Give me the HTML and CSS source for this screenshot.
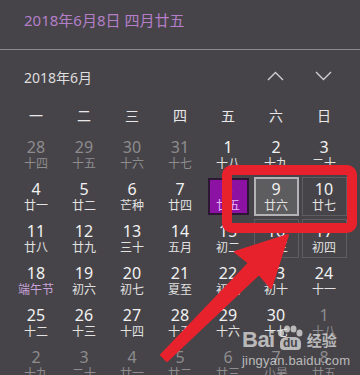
FILE: index.html
```html
<!DOCTYPE html>
<html lang="zh">
<head>
<meta charset="utf-8">
<link rel="stylesheet" href="styles.css">
</head>
<body>
<div class="app">
  <div class="today">2018年6月8日 四月廿五</div>
  <div class="monthbar">
    <div class="month">2018年6月</div>
    <div class="navs">
      <span class="nav"><svg width="17" height="10" viewBox="0 0 17 10"><polyline points="1,9 8.5,1.5 16,9"/></svg></span>
      <span class="nav"><svg width="17" height="10" viewBox="0 0 17 10"><polyline points="1,1 8.5,8.5 16,1"/></svg></span>
    </div>
  </div>
  <div class="weekdays">
    <span>一</span><span>二</span><span>三</span><span>四</span><span>五</span><span>六</span><span>日</span>
  </div>
  <div class="days">
    <div class="cell other"><span class="n">28</span><span class="l">十四</span></div>
    <div class="cell other"><span class="n">29</span><span class="l">十五</span></div>
    <div class="cell other"><span class="n">30</span><span class="l">十六</span></div>
    <div class="cell other"><span class="n">31</span><span class="l">十七</span></div>
    <div class="cell"><span class="n">1</span><span class="l">十八</span></div>
    <div class="cell"><span class="n">2</span><span class="l">十九</span></div>
    <div class="cell"><span class="n">3</span><span class="l">二十</span></div>

    <div class="cell"><span class="n">4</span><span class="l">廿一</span></div>
    <div class="cell"><span class="n">5</span><span class="l">廿二</span></div>
    <div class="cell"><span class="n">6</span><span class="l">芒种</span></div>
    <div class="cell"><span class="n">7</span><span class="l">廿四</span></div>
    <div class="cell current"><span class="n">8</span><span class="l">廿五</span></div>
    <div class="cell selected"><span class="n">9</span><span class="l">廿六</span></div>
    <div class="cell reveal"><span class="n">10</span><span class="l">廿七</span></div>

    <div class="cell"><span class="n">11</span><span class="l">廿八</span></div>
    <div class="cell"><span class="n">12</span><span class="l">廿九</span></div>
    <div class="cell"><span class="n">13</span><span class="l">三十</span></div>
    <div class="cell"><span class="n">14</span><span class="l">五月</span></div>
    <div class="cell"><span class="n">15</span><span class="l">初二</span></div>
    <div class="cell reveal"><span class="n">16</span><span class="l">初三</span></div>
    <div class="cell reveal"><span class="n">17</span><span class="l">初四</span></div>

    <div class="cell"><span class="n">18</span><span class="l festival">端午节</span></div>
    <div class="cell"><span class="n">19</span><span class="l">初六</span></div>
    <div class="cell"><span class="n">20</span><span class="l">初七</span></div>
    <div class="cell"><span class="n">21</span><span class="l">夏至</span></div>
    <div class="cell"><span class="n">22</span><span class="l">初九</span></div>
    <div class="cell"><span class="n">23</span><span class="l">初十</span></div>
    <div class="cell"><span class="n">24</span><span class="l">十一</span></div>

    <div class="cell"><span class="n">25</span><span class="l">十二</span></div>
    <div class="cell"><span class="n">26</span><span class="l">十三</span></div>
    <div class="cell"><span class="n">27</span><span class="l">十四</span></div>
    <div class="cell"><span class="n">28</span><span class="l">十五</span></div>
    <div class="cell"><span class="n">29</span><span class="l">十六</span></div>
    <div class="cell"><span class="n">30</span><span class="l">十七</span></div>
    <div class="cell other"><span class="n">1</span><span class="l">十八</span></div>

    <div class="cell other"><span class="n">2</span><span class="l">十九</span></div>
    <div class="cell other"><span class="n">3</span><span class="l">二十</span></div>
    <div class="cell other"><span class="n">4</span><span class="l">廿一</span></div>
    <div class="cell other"><span class="n">5</span><span class="l">廿二</span></div>
    <div class="cell other"><span class="n">6</span><span class="l">廿三</span></div>
    <div class="cell other"><span class="n">7</span><span class="l">小暑</span></div>
    <div class="cell other"><span class="n">8</span><span class="l">廿五</span></div>
  </div>
</div>

<svg class="annot" width="360" height="375" viewBox="0 0 360 375">
  <rect x="227" y="170" width="125" height="58" rx="5" ry="5" fill="none" stroke="#e8222c" stroke-width="10"/>
  <polygon points="288,235 271,288 259,274 167,361 161,355 249,263 235,252" fill="#e8222c" stroke="#e8222c" stroke-width="2" stroke-linejoin="round"/>
</svg>

<div class="watermark">
  <div class="wm-logo">
    <span class="wm-bai">Bai</span>
    <span class="wm-paw">
      <svg width="28" height="12" viewBox="0 0 28 12">
        <ellipse cx="5" cy="8" rx="3" ry="3.5"/>
        <ellipse cx="11" cy="4" rx="3" ry="3.5"/>
        <ellipse cx="17.5" cy="4" rx="3" ry="3.5"/>
        <ellipse cx="23.5" cy="8" rx="3" ry="3.5"/>
      </svg>
      <span class="wm-du">du</span>
    </span>
    <span class="wm-jy">经验</span>
  </div>
  <div class="wm-url">jingyan.baidu.com</div>
</div>
</body>
</html>
```

FILE: styles.css
```css
html, body {
  margin: 0;
  padding: 0;
}
body {
  width: 360px;
  height: 375px;
  overflow: hidden;
  background: #464448;
  font-family: "Noto Sans", "Noto Sans CJK SC", sans-serif;
  position: relative;
}
.app {
  display: flex;
  flex-direction: column;
}
.today {
  height: 49px;
  line-height: 40px;
  padding-left: 24px;
  font-size: 15px;
  color: #b47fc8;
  border-bottom: 1px solid #8a898b;
}
.monthbar {
  height: 52px;
  display: flex;
  align-items: center;
  justify-content: space-between;
  padding-left: 24px;
  padding-right: 13px;
}
.month {
  font-size: 14px;
  color: #dedede;
  margin-top: 1px;
}
.navs {
  display: flex;
}
.nav {
  width: 48px;
  height: 30px;
  display: flex;
  align-items: center;
  justify-content: center;
}
.nav svg polyline {
  fill: none;
  stroke: #cfcfcf;
  stroke-width: 1.4;
}
.weekdays {
  height: 26px;
  display: grid;
  grid-template-columns: repeat(7, 45px);
  column-gap: 3px;
  padding-left: 13.5px;
  align-items: center;
  font-size: 14px;
  color: #e8e8e8;
}
.weekdays span {
  text-align: center;
}
.days {
  padding-top: 7px;
  padding-left: 13.5px;
  display: grid;
  grid-template-columns: repeat(7, 45px);
  grid-auto-rows: 39px;
  column-gap: 3px;
  row-gap: 3px;
}
.cell {
  box-sizing: border-box;
  display: flex;
  flex-direction: column;
  align-items: center;
  justify-content: center;
  color: #f2f2f2;
}
.cell .n {
  font-size: 16px;
  line-height: 16px;
}
.cell .l {
  font-size: 12px;
  line-height: 15px;
  color: #e2e2e2;
  font-family: "Noto Sans CJK SC", sans-serif;
}
.cell.other .n,
.cell.other .l {
  color: #8d8c8e;
}
.cell .l.festival {
  color: #c9a2da;
}
.cell.current {
  background: #8b12a3;
  border: 2px solid #2c1634;
  margin: 1px 2px;
}
.cell.current .n,
.cell.current .l {
  color: #e8b6f5;
}
.cell.selected {
  background: #5d5c5f;
  border: 2px solid #b3b2b4;
}
.cell.reveal {
  border: 1px solid #5e5d60;
}
.annot {
  position: absolute;
  left: 0;
  top: 0;
}
.watermark {
  position: absolute;
  left: 242px;
  top: 325px;
  color: rgba(225, 225, 225, 0.75);
}
.wm-logo {
  display: flex;
  align-items: flex-end;
  height: 25px;
}
.wm-bai {
  font-family: "Liberation Sans", sans-serif;
  font-weight: bold;
  font-size: 22px;
  line-height: 21px;
  letter-spacing: -0.5px;
}
.wm-paw {
  width: 29px;
  height: 25px;
  display: flex;
  flex-direction: column;
  align-items: center;
  margin-left: 1px;
}
.wm-paw svg {
  fill: rgba(225, 225, 225, 0.75);
}
.wm-du {
  font-family: "Liberation Sans", sans-serif;
  font-weight: bold;
  font-size: 12px;
  line-height: 13px;
  color: #464448;
  background: rgba(225, 225, 225, 0.75);
  border-radius: 6px 6px 4px 4px;
  padding: 0 3px;
}
.wm-jy {
  font-family: "Noto Sans CJK SC", sans-serif;
  font-weight: bold;
  font-size: 15px;
  line-height: 21px;
  margin-left: 2px;
}
.wm-url {
  font-family: "Liberation Sans", sans-serif;
  font-size: 13px;
  margin-top: 3px;
  letter-spacing: 0.2px;
}
```
